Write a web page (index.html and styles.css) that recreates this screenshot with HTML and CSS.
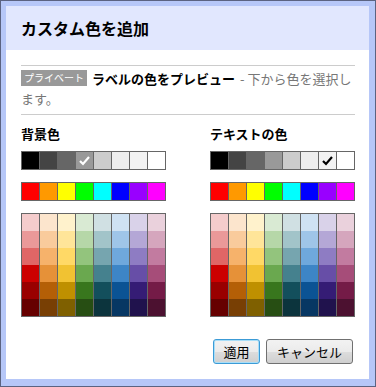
FILE: index.html
```html
<!DOCTYPE html>
<html lang="ja">
<head>
    <meta charset="UTF-8">
    <meta name="viewport" content="width=device-width, initial-scale=1.0">
    <title>カスタム色を追加</title>
    <link rel="stylesheet" href="styles.css">
</head>
<body>
    <div class="dialog">
        <div class="dialog-inner">
            <header class="dialog-title">カスタム色を追加</header>
            <div class="dialog-body">
                <div class="sep"></div>
                <div class="preview">
                    <div class="preview-line"><span class="badge">プライベート</span><b class="preview-label">ラベルの色をプレビュー</b><span class="preview-hint">- 下から色を選択し</span></div>
                    <div class="preview-line"><span class="preview-hint">ます。</span></div>
                </div>
                <div class="sep"></div>

                <div class="cols">
                    <div class="col">
                        <h3>背景色</h3>
                        <div class="swatch-row">
                            <span style="background:#000"></span>
                            <span style="background:#444"></span>
                            <span style="background:#666"></span>
                            <span class="checked light" style="background:#999"><svg viewBox="0 0 17 17"><path d="M4 9 L7 12 L13 5" /></svg></span>
                            <span style="background:#ccc"></span>
                            <span style="background:#eee"></span>
                            <span style="background:#f3f3f3"></span>
                            <span style="background:#fff"></span>
                        </div>
                        <div class="swatch-row">
                            <span style="background:#f00"></span>
                            <span style="background:#f90"></span>
                            <span style="background:#ff0"></span>
                            <span style="background:#0f0"></span>
                            <span style="background:#0ff"></span>
                            <span style="background:#00f"></span>
                            <span style="background:#90f"></span>
                            <span style="background:#f0f"></span>
                        </div>
                        <div class="palette" id="palette-bg"></div>
                    </div>

                    <div class="col">
                        <h3>テキストの色</h3>
                        <div class="swatch-row">
                            <span style="background:#000"></span>
                            <span style="background:#444"></span>
                            <span style="background:#666"></span>
                            <span style="background:#999"></span>
                            <span style="background:#ccc"></span>
                            <span style="background:#eee"></span>
                            <span class="checked" style="background:#f3f3f3"><svg viewBox="0 0 17 17"><path d="M4 9 L7 12 L13 5" /></svg></span>
                            <span style="background:#fff"></span>
                        </div>
                        <div class="swatch-row">
                            <span style="background:#f00"></span>
                            <span style="background:#f90"></span>
                            <span style="background:#ff0"></span>
                            <span style="background:#0f0"></span>
                            <span style="background:#0ff"></span>
                            <span style="background:#00f"></span>
                            <span style="background:#90f"></span>
                            <span style="background:#f0f"></span>
                        </div>
                        <div class="palette" id="palette-text"></div>
                    </div>
                </div>

                <div class="buttons">
                    <button class="btn btn-focus">適用</button>
                    <button class="btn">キャンセル</button>
                </div>
            </div>
        </div>
    </div>

    <script>
        const palette = [
            ['#f4cccc', '#fce5cd', '#fff2cc', '#d9ead3', '#d0e0e3', '#cfe2f3', '#d9d2e9', '#ead1dc'],
            ['#ea9999', '#f9cb9c', '#ffe599', '#b6d7a8', '#a2c4c9', '#9fc5e8', '#b4a7d6', '#d5a6bd'],
            ['#e06666', '#f6b26b', '#ffd966', '#93c47d', '#76a5af', '#6fa8dc', '#8e7cc3', '#c27ba0'],
            ['#cc0000', '#e69138', '#f1c232', '#6aa84f', '#45818e', '#3d85c6', '#674ea7', '#a64d79'],
            ['#990000', '#b45f06', '#bf9000', '#38761d', '#134f5c', '#0b5394', '#351c75', '#741b47'],
            ['#660000', '#783f04', '#7f6000', '#274e13', '#0c343d', '#073763', '#20124d', '#4c1130']
        ];

        function fillPalette(id) {
            const el = document.getElementById(id);
            for (let r = 0; r < palette.length; r++) {
                for (let c = 0; c < palette[r].length; c++) {
                    const cell = document.createElement('span');
                    cell.style.background = palette[r][c];
                    el.appendChild(cell);
                }
            }
        }

        fillPalette('palette-bg');
        fillPalette('palette-text');
    </script>
</body>
</html>
```

FILE: styles.css
```css
body {
    margin: 0;
    padding: 0;
    font-family: "Noto Sans CJK JP", "Liberation Sans", sans-serif;
    color: #000;
}
.dialog {
    width: 376px;
    height: 387px;
    box-sizing: border-box;
    border: 1px solid #5b6381;
    background: #b6c7f8;
    padding: 5px 6px 7px 5px;
}
.dialog-inner {
    height: 100%;
    background: #fff;
}
.dialog-title {
    height: 44px;
    display: flex;
    align-items: center;
    padding-left: 15px;
    background: #e1e7fe;
    font-size: 16px;
    font-weight: bold;
}
.dialog-body {
    padding: 15px 14px 0 15px;
}
.sep {
    height: 1px;
    background: #ccc;
}
.preview {
    padding: 2px 0 6px;
    font-size: 13px;
}
.preview-line {
    display: flex;
    align-items: center;
    gap: 5px;
    height: 20px;
    white-space: nowrap;
}
.badge {
    width: 66px;
    height: 16px;
    line-height: 16px;
    text-align: center;
    background: #999;
    color: #fff;
    font-size: 10px;
}
.preview-label {
    font-weight: bold;
    color: #000;
}
.preview-hint {
    color: #777;
}
.cols {
    display: flex;
    justify-content: space-between;
    margin-top: 10px;
}
.col h3 {
    margin: 0 0 8px;
    font-size: 13px;
    line-height: 18px;
    font-weight: bold;
}
.swatch-row {
    display: flex;
    gap: 1px;
    width: 143px;
    border: 1px solid #666;
    background: #666;
    margin-bottom: 12px;
}
.swatch-row span {
    width: 17px;
    height: 17px;
    display: block;
}
.swatch-row .checked svg {
    width: 17px;
    height: 17px;
    display: block;
}
.swatch-row .checked path {
    fill: none;
    stroke: #000;
    stroke-width: 2.2;
}
.swatch-row .light path {
    stroke: #fff;
}
.palette {
    display: grid;
    grid-template-columns: repeat(8, 17px);
    grid-auto-rows: 17px;
    column-gap: 1px;
    width: 143px;
    border: 1px solid #666;
    background: #666;
}
.palette span {
    display: block;
}
.buttons {
    display: flex;
    justify-content: flex-end;
    gap: 6px;
    margin-top: 22px;
    padding-right: 2px;
}
.btn {
    height: 25px;
    padding: 0 10px;
    font-family: "Noto Sans CJK JP", "Liberation Sans", sans-serif;
    font-size: 13px;
    color: #000;
    white-space: nowrap;
    border: 1px solid #707070;
    border-radius: 3px;
    background: linear-gradient(#f2f2f2 0%, #ebebeb 50%, #dddddd 51%, #cfcfcf 100%);
}
.btn-focus {
    width: 47px;
    padding: 0;
    border-color: #3c9bd6;
    box-shadow: inset 0 0 0 1px #a8def8;
}
```
